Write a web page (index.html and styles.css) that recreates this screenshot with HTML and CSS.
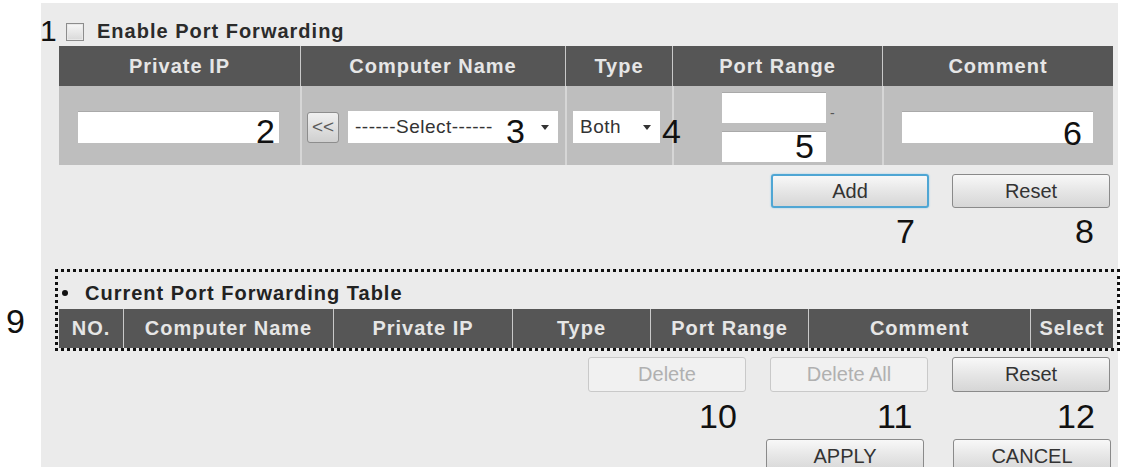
FILE: index.html
```html
<!DOCTYPE html>
<html lang="en">
<head>
    <meta charset="UTF-8">
    <meta name="viewport" content="width=device-width, initial-scale=1.0">
    <title>Port Forwarding</title>
    <link rel="stylesheet" href="styles.css">
</head>
<body>
    <div class="canvas">
        <div class="panel">
            <div class="enable-row">
                <span class="check"></span>
                <span class="enable-label">Enable Port Forwarding</span>
            </div>

            <div class="rule-table">
                <div class="head">Private IP</div>
                <div class="head">Computer Name</div>
                <div class="head">Type</div>
                <div class="head">Port Range</div>
                <div class="head">Comment</div>

                <div class="cell ip-cell"><span class="field ip-field"></span></div>
                <div class="cell name-cell">
                    <span class="copy-btn">&lt;&lt;</span>
                    <span class="drop name-drop">------Select------<i class="caret"></i></span>
                </div>
                <div class="cell type-cell">
                    <span class="drop type-drop">Both<i class="caret"></i></span>
                </div>
                <div class="cell port-cell">
                    <div class="port-line"><span class="field port-field"></span><span class="dash">-</span></div>
                    <div class="port-line"><span class="field port-field"></span></div>
                </div>
                <div class="cell comment-cell"><span class="field comment-field"></span></div>
            </div>

            <div class="btn-row add-row">
                <span class="btn focused">Add</span>
                <span class="btn">Reset</span>
            </div>

            <div class="list-box">
                <div class="list-title"><span class="dot"></span>Current Port Forwarding Table</div>
                <div class="list-head">
                    <div class="head">NO.</div>
                    <div class="head">Computer Name</div>
                    <div class="head">Private IP</div>
                    <div class="head">Type</div>
                    <div class="head">Port Range</div>
                    <div class="head">Comment</div>
                    <div class="head">Select</div>
                </div>
            </div>

            <div class="btn-row delete-row">
                <span class="btn disabled">Delete</span>
                <span class="btn disabled">Delete All</span>
                <span class="btn">Reset</span>
            </div>

            <div class="btn-row apply-row">
                <span class="btn">APPLY</span>
                <span class="btn">CANCEL</span>
            </div>
        </div>

        <!-- callout numbers drawn over the screenshot -->
        <span class="callout small c1">1</span>
        <span class="callout c2">2</span>
        <span class="callout c3">3</span>
        <span class="callout c4">4</span>
        <span class="callout c5">5</span>
        <span class="callout c6">6</span>
        <span class="callout c7">7</span>
        <span class="callout c8">8</span>
        <span class="callout c9">9</span>
        <span class="callout c10">10</span>
        <span class="callout c11">11</span>
        <span class="callout c12">12</span>
    </div>
</body>
</html>
```

FILE: styles.css
```css
body {
    margin: 0;
    padding: 0;
    background-color: #fff;
    font-family: "Liberation Sans", Arial, sans-serif;
}
.canvas {
    position: relative;
    width: 1123px;
    height: 467px;
    overflow: hidden;
}
.panel {
    margin: 3px 0 0 41px;
    width: 1077px;
    height: 464px;
    background-color: #ebebeb;
}
.enable-row {
    height: 43px;
    padding: 0 0 3px 25px;
    box-sizing: border-box;
    display: flex;
    align-items: flex-end;
}
.check {
    width: 16px;
    height: 16px;
    margin-bottom: 2px;
    border: 1px solid #8c8c8c;
    background: linear-gradient(#f7f7f7, #d9d9d9);
    box-shadow: inset 0 0 0 1px #e8e8e8;
}
.enable-label {
    margin-left: 13px;
    font-size: 20px;
    font-weight: bold;
    letter-spacing: 1px;
    color: #2b2b2b;
}
.rule-table {
    margin-left: 18px;
    width: 1054px;
    display: grid;
    grid-template-columns: 241px 265px 107px 210px 231px;
    grid-template-rows: 40px 79px;
}
.head {
    background-color: #565656;
    color: #e6e6e6;
    font-size: 20px;
    font-weight: bold;
    letter-spacing: 1px;
    display: flex;
    align-items: center;
    justify-content: center;
}
.head + .head {
    border-left: 1px solid #c9c9c9;
}
.cell {
    background-color: #bebebe;
    display: flex;
    align-items: center;
    padding-top: 3px;
    box-sizing: border-box;
}
.cell + .cell {
    border-left: 2px solid #d6d6d6;
}
.field {
    display: block;
    height: 32px;
    background-color: #fff;
    border-top: 1px solid #a9a9a9;
    box-sizing: border-box;
}
.ip-cell {
    padding-left: 19px;
}
.ip-field {
    width: 201px;
}
.name-cell {
    padding-left: 5px;
}
.copy-btn {
    width: 32px;
    height: 31px;
    box-sizing: border-box;
    border: 1px solid #8d8d8d;
    border-radius: 3px;
    background: linear-gradient(#f0f0f0, #cfcfcf);
    color: #5a5a5a;
    font-size: 19px;
    display: flex;
    align-items: center;
    justify-content: center;
}
.drop {
    height: 32px;
    background-color: #fff;
    box-sizing: border-box;
    padding: 0 9px 0 7px;
    display: flex;
    align-items: center;
    justify-content: space-between;
    font-size: 19px;
    letter-spacing: 0.5px;
    color: #333;
}
.name-drop {
    margin-left: 9px;
    width: 210px;
}
.type-cell {
    padding-left: 6px;
}
.type-drop {
    width: 87px;
}
.caret {
    width: 0;
    height: 0;
    border-top: 5px solid #333;
    border-left: 4px solid transparent;
    border-right: 4px solid transparent;
}
.port-cell {
    padding: 6px 0 0 48px;
    flex-direction: column;
    align-items: flex-start;
    justify-content: flex-start;
    gap: 8px;
}
.port-line {
    display: flex;
    align-items: flex-end;
}
.port-field {
    width: 104px;
    height: 31px;
}
.dash {
    margin: 0 0 2px 4px;
    font-size: 14px;
    color: #555;
}
.comment-cell {
    padding-left: 18px;
}
.comment-field {
    width: 191px;
}
.btn-row {
    display: flex;
    justify-content: flex-end;
    padding-right: 8px;
}
.add-row {
    margin-top: 9px;
    gap: 23px;
}
.btn {
    width: 158px;
    height: 34px;
    box-sizing: border-box;
    border: 1px solid #8a8a8a;
    border-radius: 3px;
    background: linear-gradient(#f8f8f8, #e6e6e6 50%, #d6d6d6);
    color: #333;
    font-size: 20px;
    display: flex;
    align-items: center;
    justify-content: center;
}
.btn.focused {
    border: 2px solid #4fa6d4;
    box-shadow: 0 0 2px #8cc8e8;
}
.btn.disabled {
    border-color: #c9c9c9;
    background: #f1f1f1;
    color: #b0b0b0;
}
.list-box {
    margin: 61px 0 0 14px;
    width: 1065px;
    border: 3px dotted #111;
    box-sizing: border-box;
    padding: 0 4px 0 1px;
}
.list-title {
    height: 37px;
    padding-top: 5px;
    box-sizing: border-box;
    display: flex;
    align-items: center;
    font-size: 20px;
    font-weight: bold;
    letter-spacing: 1px;
    color: #222;
}
.dot {
    width: 6px;
    height: 6px;
    border-radius: 50%;
    background-color: #111;
    margin: 0 17px 0 3px;
}
.list-head {
    display: grid;
    grid-template-columns: 64px 210px 179px 138px 158px 222px 83px;
    height: 39px;
}
.delete-row {
    margin-top: 6px;
    gap: 24px;
}
.delete-row .btn {
    height: 35px;
}
.apply-row {
    margin-top: 47px;
    gap: 29px;
    padding-right: 7px;
}
.callout {
    position: absolute;
    font-size: 34px;
    line-height: 1;
    color: #111;
}
.callout.small {
    font-size: 30px;
}
.c1 { left: 40px; top: 16px; }
.c2 { left: 256px; top: 114px; }
.c3 { left: 506px; top: 114px; }
.c4 { left: 662px; top: 114px; }
.c5 { left: 795px; top: 129px; }
.c6 { left: 1063px; top: 116px; }
.c7 { left: 896px; top: 214px; }
.c8 { left: 1075px; top: 214px; }
.c9 { left: 6px; top: 304px; }
.c10 { left: 699px; top: 399px; }
.c11 { left: 877px; top: 399px; }
.c12 { left: 1057px; top: 399px; }
```
